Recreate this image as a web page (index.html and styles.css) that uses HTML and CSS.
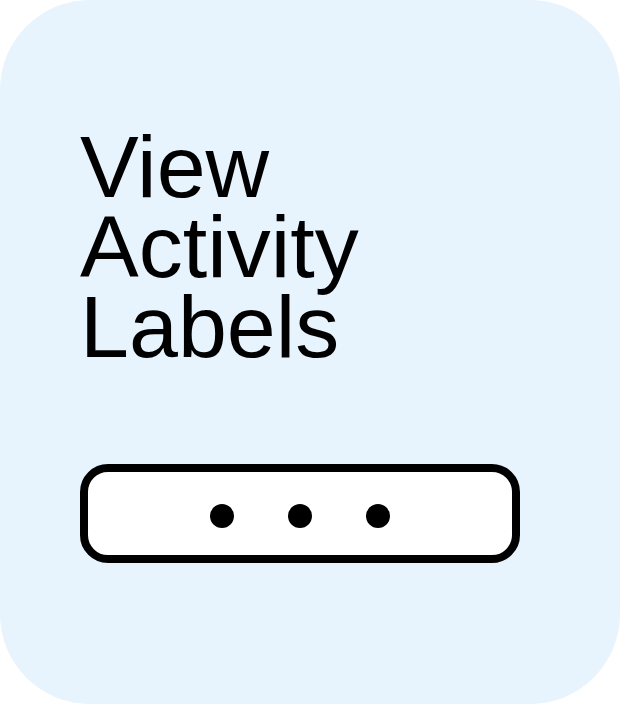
FILE: index.html
```html
<!DOCTYPE html>
<html>
<head>
<meta charset="utf-8"/>
<meta name="viewport" content="width=device-width, initial-scale=1.0"/>
<title>View Activity Labels</title>
<link rel="stylesheet" href="styles.css">
</head>
<body>

<div class="card">
	<h1 class="title">View<br>Activity<br>Labels</h1>
	<button class="more" aria-label="More">
		<span class="dot"></span>
		<span class="dot"></span>
		<span class="dot"></span>
	</button>
</div>

</body>
</html>
```

FILE: styles.css
```css
html, body {
	margin: 0;
	background: #fff;
}
body {
	font-family: "Liberation Sans", Arial, sans-serif;
}
/* card */
.card {
	width: 620px;
	height: 704px;
	box-sizing: border-box;
	background: #e7f3fd;
	border-radius: 90px;
	padding: 127px 0 0 80px;
}
.title {
	margin: 0;
	font-size: 88px;
	font-weight: normal;
	line-height: 80px;
	color: #000;
}
/* more button */
.more {
	display: flex;
	align-items: center;
	justify-content: center;
	gap: 54px;
	width: 440px;
	height: 99px;
	margin-top: 97px;
	padding: 4px 0 0;
	box-sizing: border-box;
	background: #fff;
	border: 8px solid #000;
	border-radius: 28px;
}
.dot {
	width: 24px;
	height: 24px;
	border-radius: 50%;
	background: #000;
}
```
